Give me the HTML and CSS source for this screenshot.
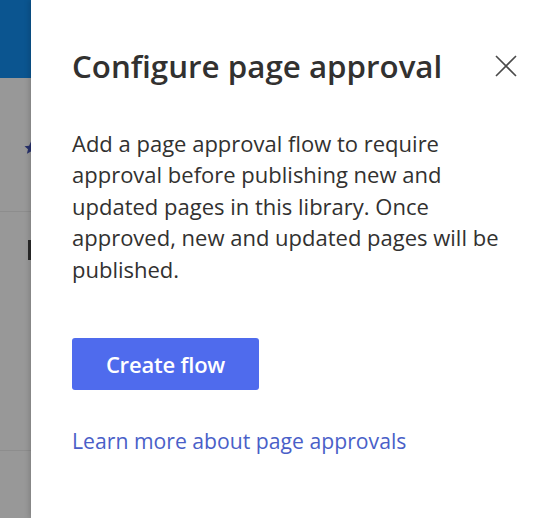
FILE: index.html
```html
<!DOCTYPE html>
<html lang="en">
<head>
<meta charset="utf-8">
<title>Configure page approval</title>
<link rel="stylesheet" href="styles.css">
</head>
<body>
<div class="app">
  <aside class="backdrop">
    <div class="bd-top"></div>
    <div class="bd-row bd-row1">
      <svg class="bd-star" width="14" height="14" viewBox="0 0 14 14"><path d="M7 0.5l1.9 4.3 4.6.4-3.5 3 1.1 4.6L7 10.4 2.9 12.8 4 8.2.5 5.2l4.6-.4z" fill="#27306b"/></svg>
    </div>
    <div class="bd-row bd-row2"><span class="bd-mark"></span></div>
    <div class="bd-row bd-row3"></div>
  </aside>
  <section class="panel">
    <header class="panel-head">
      <h1 class="panel-title">Configure page approval</h1>
      <button class="close-btn" aria-label="Close">
        <svg width="22" height="22" viewBox="0 0 22 22"><path d="M1 1L21 21M21 1L1 21" stroke="#4a4a4a" stroke-width="1.6" fill="none"/></svg>
      </button>
    </header>
    <p class="desc">Add a page approval flow to require approval before publishing new and updated pages in this library. Once approved, new and updated pages will be published.</p>
    <div class="actions"><button class="primary-btn">Create flow</button></div>
    <a class="learn-link" href="#">Learn more about page approvals</a>
  </section>
</div>
</body>
</html>
```
FILE: styles.css
```css
* { box-sizing: border-box; }
html, body { margin: 0; padding: 0; }
body {
  font-family: "Open Sans", "Noto Sans", sans-serif;
  color: #323130;
  background: #fff;
}
.app {
  display: flex;
  height: 518px;
  overflow: hidden;
}
.backdrop {
  width: 31px;
  flex: none;
  background: #989898;
  display: flex;
  flex-direction: column;
  overflow: hidden;
}
.bd-top {
  height: 78px;
  background: #0b5590;
  flex: none;
}
.bd-row {
  flex: none;
  border-bottom: 1px solid #8d8d8d;
}
.bd-row1 {
  height: 134px;
  padding: 63px 0 0 24px;
}
.bd-star { display: block; }
.bd-row2 {
  height: 239px;
  padding: 28px 0 0 28px;
}
.bd-mark {
  display: block;
  width: 4px;
  height: 20px;
  background: #2a2a2a;
}
.bd-row3 { flex: 1; border-bottom: none; }
.panel {
  flex: 1;
  background: #fff;
  padding: 44px 42px 0 41px;
  box-shadow: -2px 0 5px rgba(0,0,0,0.15);
  position: relative;
}
.panel-head {
  display: flex;
  justify-content: space-between;
  align-items: flex-start;
}
.panel-title {
  margin: 0;
  font-size: 31.3px;
  font-weight: 600;
  line-height: 44px;
  color: #323130;
}
.close-btn {
  border: 0;
  background: transparent;
  padding: 0;
  margin-top: 11px;
  width: 22px;
  height: 22px;
  cursor: pointer;
}
.close-btn svg { display: block; }
.desc {
  margin: 40px 0 0;
  font-size: 22px;
  line-height: 31.4px;
  color: #323130;
}
.actions { margin-top: 53px; }
.primary-btn {
  width: 187px;
  height: 52px;
  border: 0;
  border-radius: 3px;
  background: #4f6bed;
  color: #fff;
  font-family: inherit;
  font-size: 22px;
  font-weight: 600;
  letter-spacing: -0.2px;
  cursor: pointer;
}
.learn-link {
  display: inline-block;
  margin-top: 37px;
  font-size: 21.2px;
  line-height: 28px;
  color: #4a5fc8;
  text-decoration: none;
}
```
